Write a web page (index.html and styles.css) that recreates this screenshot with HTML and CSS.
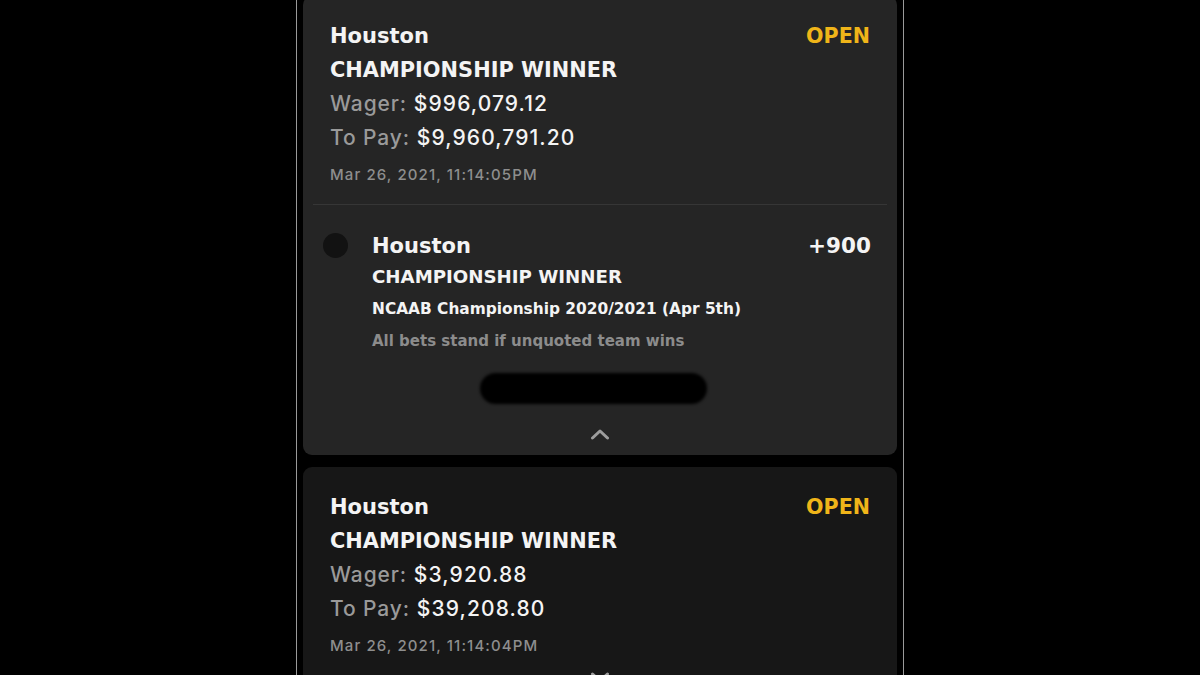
FILE: index.html
```html
<!DOCTYPE html>
<html lang="en">
<head>
<meta charset="utf-8">
<title>Bets</title>
<link rel="stylesheet" href="styles.css">
</head>
<body>
<div class="screen">
  <div class="phone">
    <div class="card card-open">
      <div class="summary">
        <div class="row"><span class="team">Houston</span><span class="status">OPEN</span></div>
        <div class="market">CHAMPIONSHIP WINNER</div>
        <div class="amount"><span class="label">Wager:</span> <span class="value">$996,079.12</span></div>
        <div class="amount"><span class="label">To Pay:</span> <span class="value">$9,960,791.20</span></div>
        <div class="date">Mar 26, 2021, 11:14:05PM</div>
      </div>
      <div class="divider"></div>
      <div class="leg">
        <div class="dot"></div>
        <div class="leg-body">
          <div class="leg-row"><span class="team">Houston</span><span class="odds">+900</span></div>
          <div class="leg-market">CHAMPIONSHIP WINNER</div>
          <div class="event">NCAAB Championship 2020/2021 (Apr 5th)</div>
          <div class="note">All bets stand if unquoted team wins</div>
        </div>
      </div>
      <div class="redact-row"><div class="redact"></div></div>
      <div class="toggle">
        <svg width="20" height="12" viewBox="0 0 20 12"><polyline points="2.5,10 10,3 17.5,10" fill="none" stroke="#9d9d9d" stroke-width="3" stroke-linecap="round" stroke-linejoin="round"/></svg>
      </div>
    </div>
    <div class="card card-closed">
      <div class="summary summary-closed">
        <div class="row"><span class="team">Houston</span><span class="status">OPEN</span></div>
        <div class="market">CHAMPIONSHIP WINNER</div>
        <div class="amount"><span class="label">Wager:</span> <span class="value">$3,920.88</span></div>
        <div class="amount"><span class="label">To Pay:</span> <span class="value">$39,208.80</span></div>
        <div class="date">Mar 26, 2021, 11:14:04PM</div>
      </div>
      <div class="toggle toggle-down">
        <svg width="20" height="12" viewBox="0 0 20 12"><polyline points="2.5,2 10,9 17.5,2" fill="none" stroke="#9d9d9d" stroke-width="3" stroke-linecap="round" stroke-linejoin="round"/></svg>
      </div>
    </div>
  </div>
</div>
</body>
</html>
```

FILE: styles.css
```css
html, body {
  margin: 0;
  padding: 0;
  background: #000;
  height: 675px;
  overflow: hidden;
}

.screen {
  display: flex;
  justify-content: center;
  height: 675px;
}

.phone {
  box-sizing: border-box;
  width: 608px;
  height: 675px;
  border-left: 1px solid #9a9a9a;
  border-right: 1px solid #9a9a9a;
  padding: 0 6px;
  display: flex;
  flex-direction: column;
  overflow: hidden;
}

.card {
  border-radius: 9px;
  flex-shrink: 0;
}

.card-open {
  background: #252525;
  margin-top: -4px;
}

.card-closed {
  background: #171717;
  margin-top: 12px;
  height: 260px;
}

.summary {
  padding: 23px 27px 19px;
}

.summary-closed {
  padding-bottom: 16px;
}

.row, .leg-row {
  display: flex;
  justify-content: space-between;
  align-items: baseline;
}

.row {
  line-height: 34px;
}

.team, .status, .market, .odds, .leg-market, .event, .note {
  font-family: "DejaVu Sans", sans-serif;
  font-weight: bold;
}

.team {
  font-size: 21px;
  color: #f4f4f4;
}

.status {
  font-size: 20.6px;
  color: #f0b519;
}

.market {
  font-size: 20.9px;
  line-height: 34px;
  color: #f4f4f4;
}

.amount {
  font-family: Inter, "Liberation Sans", sans-serif;
  font-size: 21px;
  font-weight: 500;
  line-height: 34px;
  letter-spacing: 1.1px;
}

.label {
  color: #9a9a9a;
  letter-spacing: 0.9px;
}

.value {
  color: #f4f4f4;
}

.date {
  margin-top: 10px;
  font-family: Inter, "Liberation Sans", sans-serif;
  font-size: 15px;
  font-weight: 500;
  letter-spacing: 1.1px;
  line-height: 20px;
  color: #8e8e8e;
}

.divider {
  height: 1px;
  margin: 0 10px;
  background: #363636;
}

.leg {
  display: flex;
  padding: 26px 26px 0 20px;
}

.dot {
  width: 25px;
  height: 25px;
  border-radius: 50%;
  background: #121212;
  margin-top: 2px;
  margin-right: 24px;
  flex-shrink: 0;
}

.leg-body {
  flex: 1;
}

.leg-row {
  line-height: 30px;
}

.odds {
  font-size: 21.5px;
  color: #f4f4f4;
}

.leg-market {
  font-size: 18.2px;
  line-height: 32px;
  color: #f4f4f4;
}

.event {
  font-size: 15.4px;
  line-height: 32px;
  color: #f4f4f4;
}

.note {
  font-size: 15px;
  line-height: 33px;
  color: #8c8c8c;
}

.redact-row {
  padding-top: 15px;
  display: flex;
}

.redact {
  width: 227px;
  height: 31px;
  margin-left: 177px;
  border-radius: 16px;
  background: #000;
  filter: blur(1.5px);
}

.toggle {
  display: flex;
  justify-content: center;
  padding: 24px 0 15px;
}

.toggle-down {
  padding: 0;
}

.toggle svg {
  display: block;
}
```
